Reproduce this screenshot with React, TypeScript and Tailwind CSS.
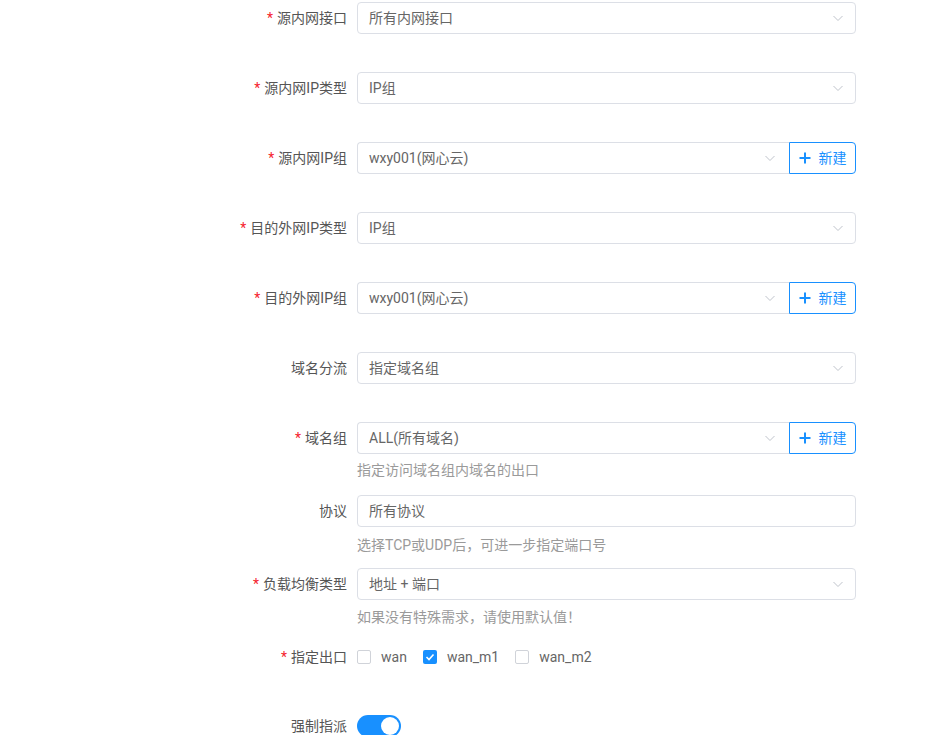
import React from "react";

const FONT = { fontFamily: "Roboto, 'Noto Sans CJK SC', 'Noto Sans', sans-serif" };

function Chevron() {
  return (
    <svg width="12" height="12" viewBox="0 0 12 12" fill="none" className="shrink-0">
      <path d="M1.5 4 L6 8.5 L10.5 4" stroke="#c0c4cc" strokeWidth="1" />
    </svg>
  );
}

function Label({ text, required }: { text: string; required?: boolean }) {
  return (
    <div className="w-[357px] shrink-0 pr-[10px] text-right text-[14px] leading-8 text-[#555]">
      {required && <span className="mr-[4px] text-[#f5222d]">*</span>}
      {text}
    </div>
  );
}

function Select({ value, arrow = true }: { value: string; arrow?: boolean }) {
  return (
    <div className="flex h-8 w-[499px] items-center justify-between rounded-[4px] border border-[#dcdfe6] bg-white pl-[11px] pr-[11px] text-[14px] text-[#666]">
      <span>{value}</span>
      {arrow && <Chevron />}
    </div>
  );
}

function SelectWithButton({ value }: { value: string }) {
  return (
    <div className="flex h-8 w-[499px]">
      <div className="flex h-8 w-[432px] items-center justify-between rounded-l-[4px] border border-r-0 border-[#dcdfe6] bg-white pl-[11px] pr-[13px] text-[14px] text-[#666]">
        <span>{value}</span>
        <Chevron />
      </div>
      <div className="flex h-8 w-[67px] items-center justify-center gap-[8px] rounded-r-[4px] border border-[#1890ff] text-[14px] text-[#1890ff]">
        <svg width="12" height="12" viewBox="0 0 12 12">
          <path d="M6 0.5 V11.5 M0.5 6 H11.5" stroke="#1890ff" strokeWidth="2" />
        </svg>
        <span>新建</span>
      </div>
    </div>
  );
}

function Row({ label, required, children, className = "" }: { label: string; required?: boolean; children: React.ReactNode; className?: string }) {
  return (
    <div className={"flex items-center " + className}>
      <Label text={label} required={required} />
      {children}
    </div>
  );
}

function Hint({ text, className = "" }: { text: string; className?: string }) {
  return <div className={"pl-[357px] text-[14px] leading-5 text-[#9a9a9a] " + className}>{text}</div>;
}

function Checkbox({ label, checked }: { label: string; checked?: boolean }) {
  return (
    <div className="flex items-center gap-[10px]">
      {checked ? (
        <div className="flex h-[14px] w-[14px] items-center justify-center rounded-[2px] bg-[#1890ff]">
          <svg width="10" height="10" viewBox="0 0 10 10">
            <path d="M1.5 5 L4 7.5 L8.5 2.5" stroke="white" strokeWidth="1.6" fill="none" />
          </svg>
        </div>
      ) : (
        <div className="h-[14px] w-[14px] rounded-[2px] border border-[#d0d3d9] bg-white" />
      )}
      <span className="text-[14px] text-[#666]">{label}</span>
    </div>
  );
}

export default function App() {
  return (
    <div className="min-h-[735px] w-[945px] overflow-hidden bg-white pt-[2px]" style={FONT}>
      <Row label="源内网接口" required className="mb-[38px]">
        <Select value="所有内网接口" />
      </Row>
      <Row label="源内网IP类型" required className="mb-[38px]">
        <Select value="IP组" />
      </Row>
      <Row label="源内网IP组" required className="mb-[38px]">
        <SelectWithButton value="wxy001(网心云)" />
      </Row>
      <Row label="目的外网IP类型" required className="mb-[38px]">
        <Select value="IP组" />
      </Row>
      <Row label="目的外网IP组" required className="mb-[38px]">
        <SelectWithButton value="wxy001(网心云)" />
      </Row>
      <Row label="域名分流" className="mb-[38px]">
        <Select value="指定域名组" />
      </Row>
      <Row label="域名组" required>
        <SelectWithButton value="ALL(所有域名)" />
      </Row>
      <Hint text="指定访问域名组内域名的出口" className="mt-[6px]" />
      <Row label="协议" className="mt-[15px]">
        <Select value="所有协议" arrow={false} />
      </Row>
      <Hint text="选择TCP或UDP后，可进一步指定端口号" className="mt-[8px]" />
      <Row label="负载均衡类型" required className="mt-[13px]">
        <Select value="地址 + 端口" />
      </Row>
      <Hint text="如果没有特殊需求，请使用默认值！" className="mt-[7px]" />
      <Row label="指定出口" required className="mt-[14px] h-8">
        <div className="flex items-center gap-[16px]">
          <Checkbox label="wan" />
          <Checkbox label="wan_m1" checked />
          <Checkbox label="wan_m2" />
        </div>
      </Row>
      <Row label="强制指派" className="mt-[37px] h-8">
        <div className="relative h-[22px] w-[44px] rounded-full bg-[#1890ff]">
          <div className="absolute right-[2px] top-[2px] h-[18px] w-[18px] rounded-full bg-white" />
        </div>
      </Row>
    </div>
  );
}
